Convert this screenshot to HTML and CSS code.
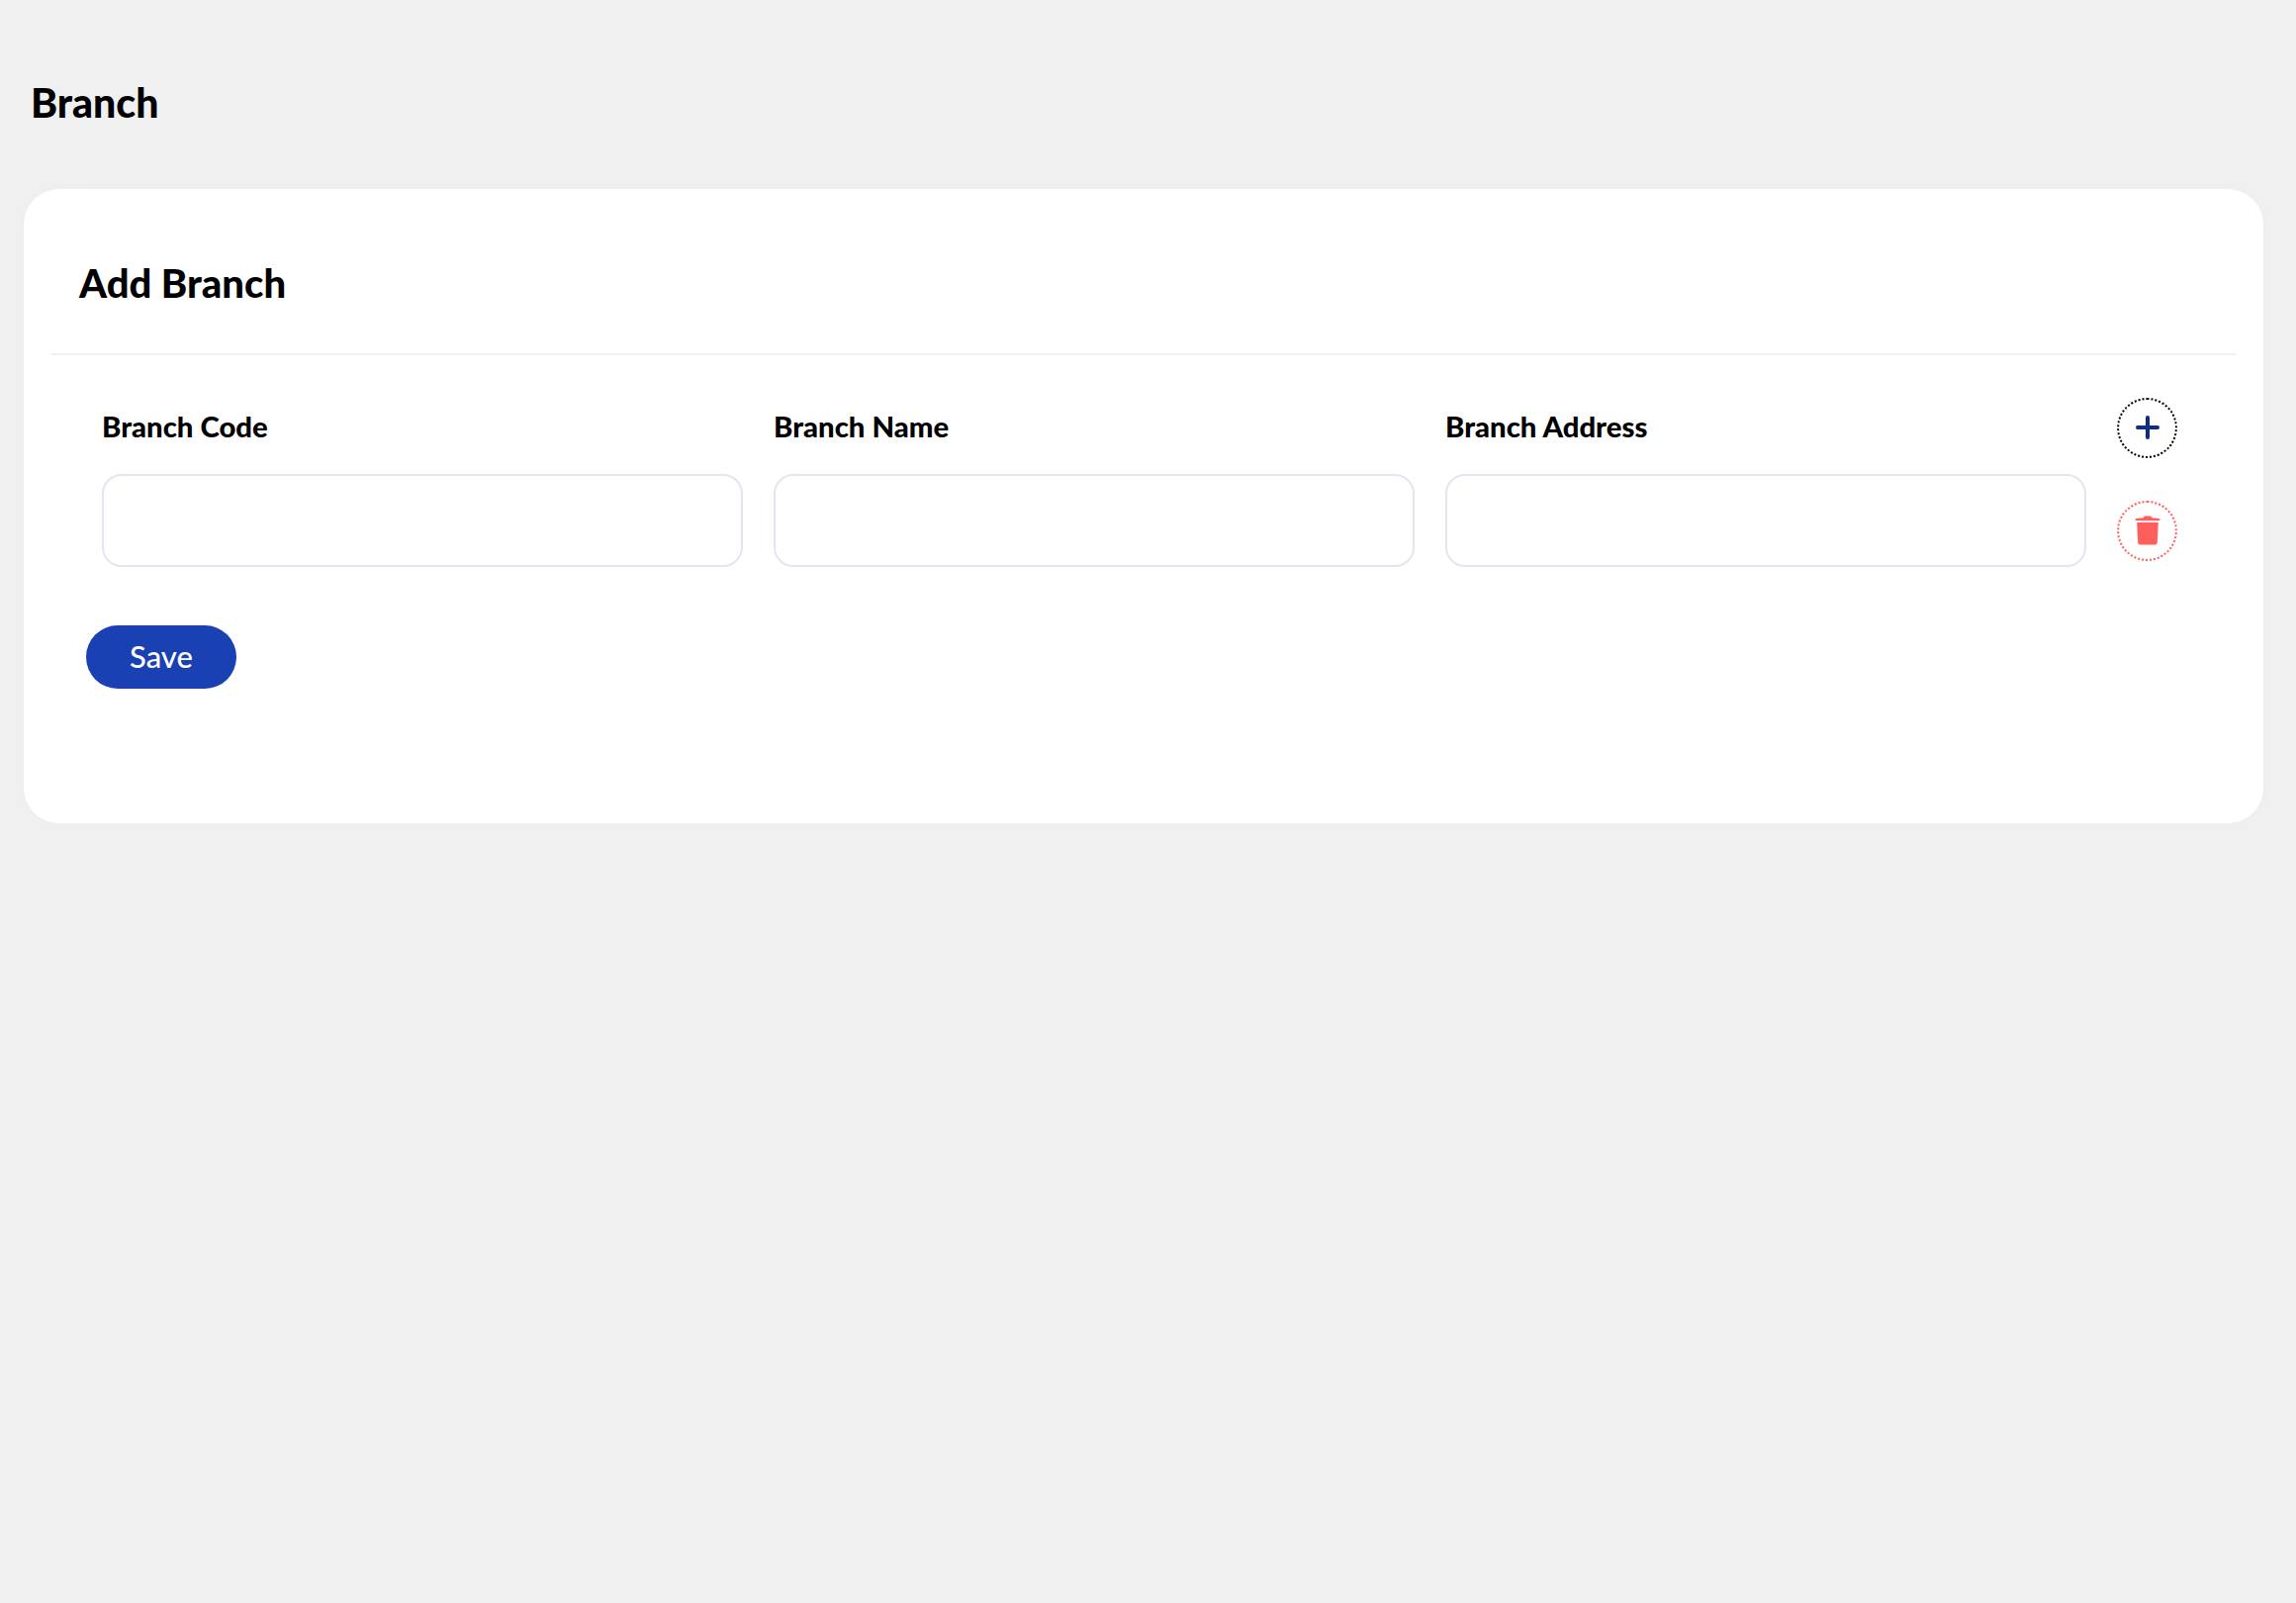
FILE: index.html
```html
<!DOCTYPE html>
<html lang="en">
<head>
    <meta charset="UTF-8">
    <meta name="viewport" content="width=device-width, initial-scale=1.0">
    <title>Branch</title>
    <link rel="stylesheet" href="styles.css">
</head>
<body>
    <h1 class="page-title">Branch</h1>
    <div class="card">
        <h2 class="card-title">Add Branch</h2>
        <form class="branch-form">
            <div class="branch-row">
                <div class="field">
                    <label for="branch-code">Branch Code</label>
                    <input type="text" id="branch-code">
                </div>
                <div class="field">
                    <label for="branch-name">Branch Name</label>
                    <input type="text" id="branch-name">
                </div>
                <div class="field">
                    <label for="branch-address">Branch Address</label>
                    <input type="text" id="branch-address">
                </div>
                <div class="row-actions">
                    <button type="button" class="icon-btn add-btn" aria-label="Add row">
                        <svg width="24" height="24" viewBox="0 0 24 24"><path d="M12 2v20M2 12h20" fill="none" stroke="#0f2d80" stroke-width="4" stroke-linecap="round"/></svg>
                    </button>
                    <button type="button" class="icon-btn delete-btn" aria-label="Delete row">
                        <svg width="26" height="30" viewBox="0 0 26 30"><path fill="#ff5f5b" d="M8.500 2.400C8.700 .9 10 .6 13 .6s4.300 .3 4.500 1.800c3.300 0 6.800.2 7.500.8.600.5.600 1.400 0 1.700-1 .4-23 .4-24 0-.6-.3-.6-1.200 0-1.700.7-.6 4.200-.8 7.500-.8zM2.200 7h21.600l-1 20c-.1 1.700-1.100 2.600-2.800 2.600H6c-1.700 0-2.700-.9-2.800-2.600z"/></svg>
                    </button>
                </div>
            </div>
            <button type="submit" class="save-btn">Save</button>
        </form>
    </div>
</body>
</html>
```

FILE: styles.css
```css
body {
    font-family: 'Lato', 'Liberation Sans', sans-serif;
    margin: 0;
    padding: 0 33px 0 24px;
    min-height: 1620px;
    box-sizing: border-box;
    background-color: #f0f0f0;
    color: #000;
}
.page-title {
    margin: 0;
    padding: 81px 0 0 7px;
    height: 191px;
    box-sizing: border-box;
    font-size: 41px;
    line-height: 46px;
    font-weight: 900;
}
.card {
    height: 641px;
    box-sizing: border-box;
    padding: 0 28px;
    background-color: white;
    border-radius: 36px;
    box-shadow: 0 0 30px rgba(0,0,0,0.01);
}
.card-title {
    margin: 0;
    height: 168px;
    box-sizing: border-box;
    padding: 72px 0 0 28px;
    border-bottom: 2px solid #eff0f4;
    font-size: 40px;
    line-height: 46px;
    font-weight: 900;
}
.branch-form {
    padding: 0 7px 0 35px;
}
.branch-row {
    display: flex;
    gap: 31px;
    padding: 42px 0 0 16px;
}
.field {
    display: flex;
    flex-direction: column;
    width: 648px;
}
.field label {
    height: 78px;
    padding-top: 12px;
    box-sizing: border-box;
    font-size: 29.3px;
    line-height: 36px;
    font-weight: 900;
}
.field input {
    height: 94px;
    box-sizing: border-box;
    border: 2px solid #e3e6f0;
    border-radius: 20px;
    background: white;
}
.row-actions {
    display: flex;
    flex-direction: column;
    gap: 43px;
    padding-top: 1px;
}
.icon-btn {
    display: flex;
    align-items: center;
    justify-content: center;
    width: 61px;
    height: 61px;
    padding: 0 0 2px;
    background: white;
    border-radius: 50%;
}
.add-btn {
    border: 2px dotted #000;
}
.delete-btn {
    border: 2px dotted #ff5f5b;
}
.save-btn {
    display: block;
    width: 152px;
    height: 64px;
    margin-top: 59px;
    padding-bottom: 4px;
    border: none;
    border-radius: 32px;
    background-color: #1941b3;
    color: white;
    font-family: inherit;
    font-size: 31px;
    font-weight: 500;
}
```
